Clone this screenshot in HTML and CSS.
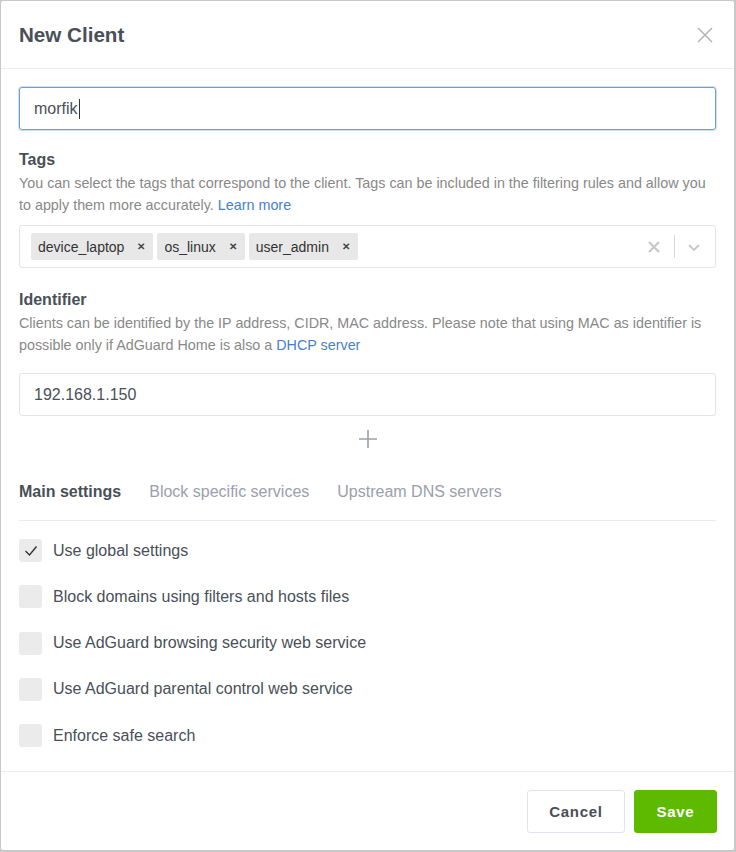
FILE: index.html
```html
<!DOCTYPE html>
<html>
<head>
<meta charset="utf-8">
<link rel="stylesheet" href="styles.css">
</head>
<body>
<div class="modal">
  <div class="modal-header">
    <h2 class="modal-title">New Client</h2>
    <svg class="close" width="16" height="16" viewBox="0 0 16 16"><path d="M1 1L15 15M15 1L1 15" stroke="#b5b5b5" stroke-width="1.5" fill="none"/></svg>
  </div>
  <div class="modal-body">
    <div class="input focus">morfik<span class="caret"></span></div>

    <div class="section tags-section">
      <div class="label">Tags</div>
      <div class="desc">You can select the tags that correspond to the client. Tags can be included in the filtering rules and allow you to apply them more accurately. <a class="link">Learn more</a></div>
      <div class="select">
        <div class="chips">
          <span class="chip">device_laptop <span class="chip-x">&#x2715;</span></span>
          <span class="chip">os_linux <span class="chip-x">&#x2715;</span></span>
          <span class="chip">user_admin <span class="chip-x">&#x2715;</span></span>
        </div>
        <div class="indicators">
          <svg width="14" height="14" viewBox="0 0 14 14"><path d="M2 2L12 12M12 2L2 12" stroke="#c8c8c8" stroke-width="2.2" fill="none"/></svg>
          <span class="sep"></span>
          <svg width="14" height="14" viewBox="0 0 14 14"><path d="M2 5L7 10L12 5" stroke="#c8c8c8" stroke-width="1.8" fill="none"/></svg>
        </div>
      </div>
    </div>

    <div class="section ident-section">
      <div class="label">Identifier</div>
      <div class="desc">Clients can be identified by the IP address, CIDR, MAC address. Please note that using MAC as identifier is possible only if AdGuard Home is also a <a class="link">DHCP server</a></div>
      <div class="input ident">192.168.1.150</div>
      <div class="plus-row">
        <svg width="20" height="20" viewBox="0 0 20 20"><path d="M10 1V19M1 10H19" stroke="#9aa0ac" stroke-width="1.6" fill="none"/></svg>
      </div>
    </div>

    <div class="tabs">
      <span class="tab active">Main settings</span>
      <span class="tab">Block specific services</span>
      <span class="tab">Upstream DNS servers</span>
    </div>

    <div class="checks">
      <div class="check"><span class="box"><svg width="14" height="12" viewBox="0 0 14 12"><path d="M1.5 6L5.5 10L12.5 1.5" stroke="#333" stroke-width="1.4" fill="none"/></svg></span>Use global settings</div>
      <div class="check"><span class="box"></span>Block domains using filters and hosts files</div>
      <div class="check"><span class="box"></span>Use AdGuard browsing security web service</div>
      <div class="check"><span class="box"></span>Use AdGuard parental control web service</div>
      <div class="check"><span class="box"></span>Enforce safe search</div>
    </div>
  </div>
  <div class="modal-footer">
    <button class="btn btn-secondary">Cancel</button>
    <button class="btn btn-success">Save</button>
  </div>
</div>
</body>
</html>
```
FILE: styles.css
```css
* { box-sizing: border-box; }
html, body { margin: 0; padding: 0; }
body {
  background: #c8c8c8;
  font-family: "Liberation Sans", Arial, sans-serif;
  color: #495057;
  width: 736px;
  height: 852px;
  overflow: hidden;
}
.modal {
  width: 735px;
  height: 851px;
  background: #fff;
  border: 1px solid #c8c8c8;
  border-radius: 3px;
  display: flex;
  flex-direction: column;
}
.modal-header {
  height: 68px;
  display: flex;
  align-items: center;
  justify-content: space-between;
  padding: 0 19px 0 18px;
  border-bottom: 1px solid #e9ecef;
  flex-shrink: 0;
}
.modal-title {
  margin: 0;
  font-size: 20.6px;
  font-weight: bold;
  color: #495057;
}
.close { margin-right: 2px; }
.modal-body {
  flex: 1;
  padding: 18px 18px 0 18px;
}
.input {
  height: 43px;
  border: 1px solid #e0e5ec;
  border-radius: 3px;
  padding: 0 14px;
  display: flex;
  align-items: center;
  font-size: 16px;
  color: #495057;
}
.input.focus {
  border-color: #6f9ddb;
  box-shadow: 0 0 0 1px rgba(70,127,207,0.25);
}
.caret {
  display: inline-block;
  width: 1px;
  height: 20px;
  background: #333;
  margin-left: 1px;
}
.tags-section { margin-top: 20px; }
.ident-section { margin-top: 22px; }
.label {
  font-size: 16px;
  font-weight: bold;
  color: #495057;
  line-height: 20px;
}
.desc {
  margin-top: 2px;
  font-size: 14.33px;
  line-height: 22px;
  color: #888;
}
.link { color: #467fcf; text-decoration: none; }
.select {
  margin-top: 9px;
  height: 43px;
  border: 1px solid #e0e5ec;
  border-radius: 3px;
  display: flex;
  align-items: center;
  justify-content: space-between;
  padding: 0 14px 0 11px;
}
.chips { display: flex; gap: 4px; }
.chip {
  background: #e8e8e8;
  border-radius: 2px;
  height: 27px;
  padding: 0 8px 0 7px;
  display: flex;
  align-items: center;
  font-size: 14px;
  color: #333;
}
.chip-x {
  font-size: 10px;
  font-weight: bold;
  margin-left: 13px;
  color: #444;
}
.indicators { display: flex; align-items: center; }
.indicators svg:first-child { margin-right: 13px; }
.indicators svg:last-child { margin-left: 12px; }
.sep { width: 1px; height: 23px; background: #d8d8d8; }
.ident { margin-top: 17px; }
.plus-row {
  display: flex;
  justify-content: center;
  margin-top: 13px;
}
.tabs {
  margin-top: 34px;
  display: flex;
  gap: 28px;
  padding-bottom: 19px;
  border-bottom: 1px solid #e9ecef;
  font-size: 16px;
}
.tab { color: #9aa0ac; }
.tab.active { color: #495057; font-weight: bold; }
.checks { margin-top: 18px; }
.check {
  display: flex;
  align-items: center;
  height: 23px;
  margin-bottom: 23.25px;
  font-size: 16px;
  color: #495057;
}
.box {
  width: 23px;
  height: 23px;
  border-radius: 3px;
  background: #ebebeb;
  margin-right: 11px;
  display: flex;
  align-items: center;
  justify-content: center;
}
.modal-footer {
  height: 79px;
  border-top: 1px solid #e9ecef;
  display: flex;
  align-items: flex-start;
  justify-content: flex-end;
  padding: 18px 17px 0 0;
  gap: 9px;
  flex-shrink: 0;
}
.btn {
  height: 43px;
  border-radius: 3px;
  font-family: "Liberation Sans", Arial, sans-serif;
  font-size: 15px;
  font-weight: bold;
  letter-spacing: 0.7px;
  padding: 0;
}
.btn-secondary {
  width: 98px;
  background: #fff;
  border: 1px solid #e0e5ec;
  color: #495057;
}
.btn-success {
  width: 83px;
  background: #5eba00;
  border: 1px solid #5eba00;
  color: #fff;
}
```
